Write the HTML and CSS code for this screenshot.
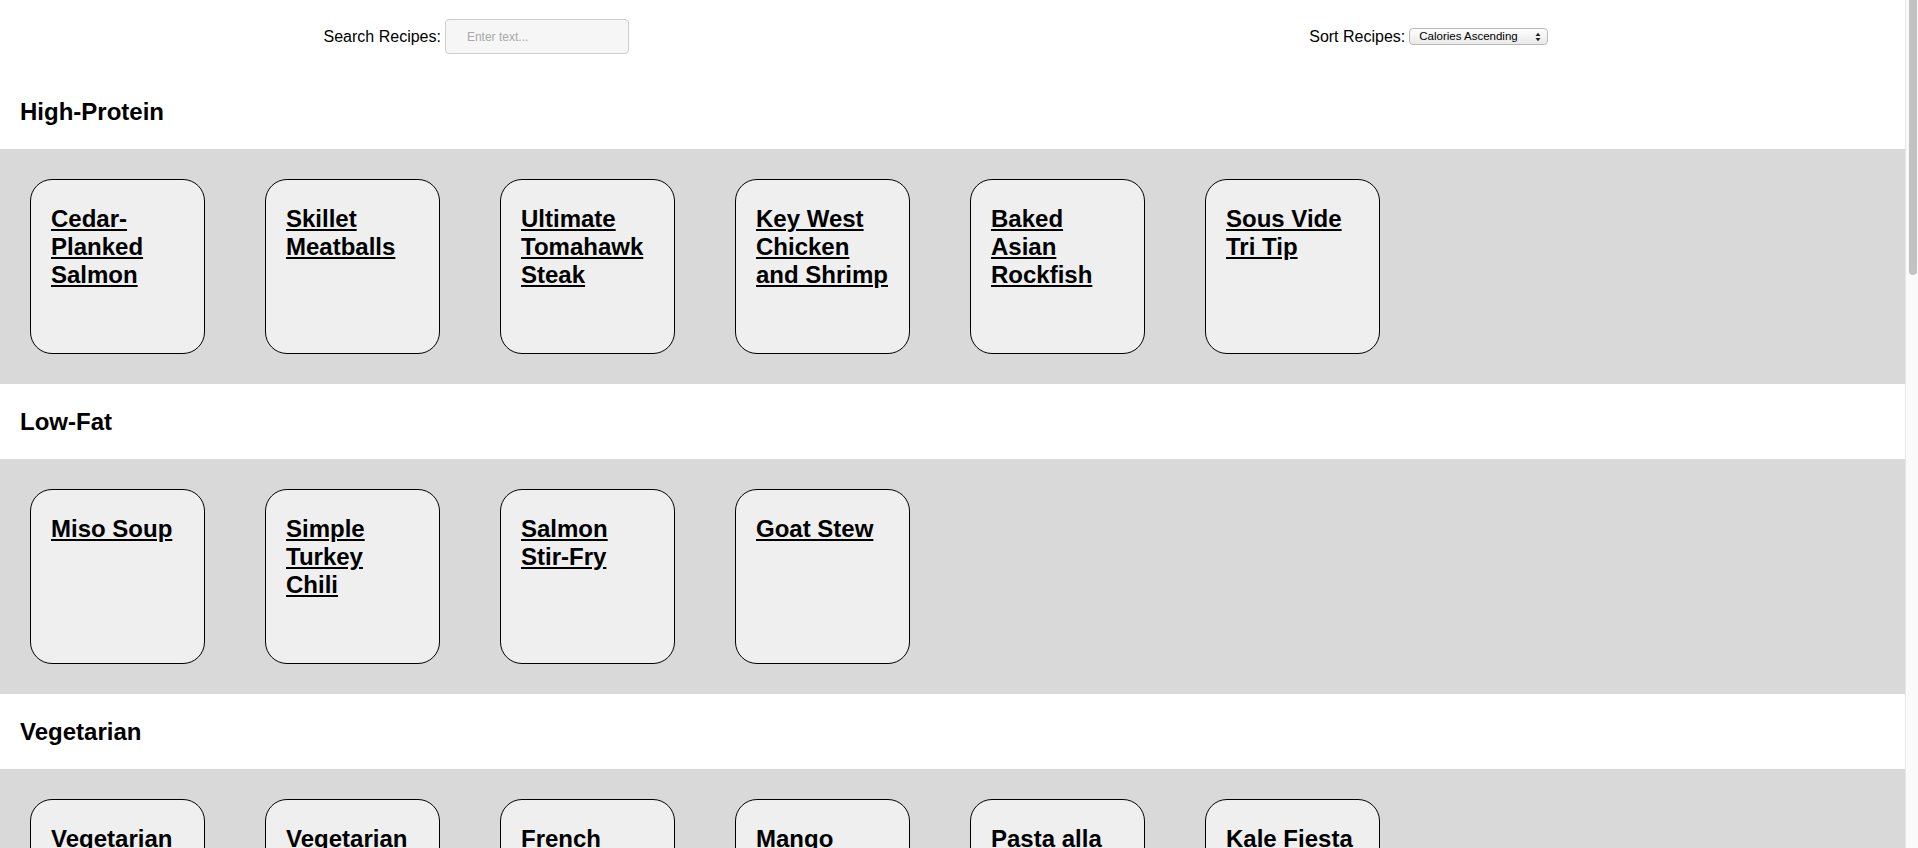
FILE: index.html
```html
<!DOCTYPE html>
<html lang="en">
<head>
<meta charset="utf-8">
<title>Recipes</title>
<link rel="stylesheet" href="styles.css">
</head>
<body>
<div class="page">
  <div class="toolbar">
    <div class="tool">
      <label class="tool-label" for="search">Search Recipes:</label>
      <input class="search-input" id="search" type="text" placeholder="Enter text...">
    </div>
    <div class="tool">
      <label class="tool-label" for="sort">Sort Recipes:</label>
      <span class="select-wrap">
        <select class="sort-select" id="sort">
          <option>Calories Ascending</option>
          <option>Calories Descending</option>
        </select>
        <svg class="select-arrows" width="6" height="10" viewBox="0 0 6 10"><path d="M0.5 4 L3 0.8 L5.5 4 Z M0.5 6 L3 9.2 L5.5 6 Z" fill="#222"/></svg>
      </span>
    </div>
  </div>

  <section class="category">
    <div class="category-head"><h2 class="category-title">High-Protein</h2></div>
    <div class="card-band">
      <div class="card"><h2 class="card-title"><a href="#">Cedar-Planked Salmon</a></h2></div>
      <div class="card"><h2 class="card-title"><a href="#">Skillet Meatballs</a></h2></div>
      <div class="card"><h2 class="card-title"><a href="#">Ultimate Tomahawk Steak</a></h2></div>
      <div class="card"><h2 class="card-title"><a href="#">Key West Chicken and Shrimp</a></h2></div>
      <div class="card"><h2 class="card-title"><a href="#">Baked Asian Rockfish</a></h2></div>
      <div class="card"><h2 class="card-title"><a href="#">Sous Vide Tri Tip</a></h2></div>
    </div>
  </section>

  <section class="category">
    <div class="category-head"><h2 class="category-title">Low-Fat</h2></div>
    <div class="card-band">
      <div class="card"><h2 class="card-title"><a href="#">Miso Soup</a></h2></div>
      <div class="card"><h2 class="card-title"><a href="#">Simple Turkey Chili</a></h2></div>
      <div class="card"><h2 class="card-title"><a href="#">Salmon Stir-Fry</a></h2></div>
      <div class="card"><h2 class="card-title"><a href="#">Goat Stew</a></h2></div>
    </div>
  </section>

  <section class="category">
    <div class="category-head"><h2 class="category-title">Vegetarian</h2></div>
    <div class="card-band">
      <div class="card"><h2 class="card-title"><a href="#">Vegetarian Chili</a></h2></div>
      <div class="card"><h2 class="card-title"><a href="#">Vegetarian Lasagna</a></h2></div>
      <div class="card"><h2 class="card-title"><a href="#">French Onion Soup</a></h2></div>
      <div class="card"><h2 class="card-title"><a href="#">Mango Salsa Bowl</a></h2></div>
      <div class="card"><h2 class="card-title"><a href="#">Pasta alla Norma</a></h2></div>
      <div class="card"><h2 class="card-title"><a href="#">Kale Fiesta Salad</a></h2></div>
    </div>
  </section>

  <section class="category">
    <div class="category-head"><h2 class="category-title">Vegan</h2></div>
    <div class="card-band">
      <div class="card"><h2 class="card-title"><a href="#">Lentil Curry</a></h2></div>
      <div class="card"><h2 class="card-title"><a href="#">Chickpea Tacos</a></h2></div>
      <div class="card"><h2 class="card-title"><a href="#">Tofu Scramble</a></h2></div>
    </div>
  </section>

  <section class="category">
    <div class="category-head"><h2 class="category-title">Gluten-Free</h2></div>
    <div class="card-band">
      <div class="card"><h2 class="card-title"><a href="#">Grilled Lamb Chops</a></h2></div>
      <div class="card"><h2 class="card-title"><a href="#">Stuffed Peppers</a></h2></div>
      <div class="card"><h2 class="card-title"><a href="#">Shrimp Risotto</a></h2></div>
      <div class="card"><h2 class="card-title"><a href="#">Roast Chicken</a></h2></div>
    </div>
  </section>

  <section class="category">
    <div class="category-head"><h2 class="category-title">Low-Carb</h2></div>
    <div class="card-band">
      <div class="card"><h2 class="card-title"><a href="#">Zucchini Noodles</a></h2></div>
      <div class="card"><h2 class="card-title"><a href="#">Cauliflower Fried Rice</a></h2></div>
      <div class="card"><h2 class="card-title"><a href="#">Egg Muffins</a></h2></div>
    </div>
  </section>

  <section class="category">
    <div class="category-head"><h2 class="category-title">Dairy-Free</h2></div>
    <div class="card-band">
      <div class="card"><h2 class="card-title"><a href="#">Thai Green Curry</a></h2></div>
      <div class="card"><h2 class="card-title"><a href="#">Beef Pho</a></h2></div>
    </div>
  </section>

  <section class="category">
    <div class="category-head"><h2 class="category-title">Keto</h2></div>
    <div class="card-band">
      <div class="card"><h2 class="card-title"><a href="#">Bacon Egg Cups</a></h2></div>
      <div class="card"><h2 class="card-title"><a href="#">Garlic Butter Steak</a></h2></div>
    </div>
  </section>
</div>
<div class="scrollbar" aria-hidden="true"><div class="scrollbar-thumb"></div></div>
</body>
</html>
```

FILE: styles.css
```css
body {
  margin: 0;
  font-family: "Liberation Sans", Arial, sans-serif;
  color: #000;
  background: #fff;
}

.page {
  margin-right: 13px;
  padding-bottom: 60px;
}

/* window scrollbar (drawn, since the capture hides native ones) */
.scrollbar {
  position: fixed;
  top: 0;
  right: 0;
  bottom: 0;
  width: 12px;
  border-left: 1px solid #e8e8e8;
  background: #fafafa;
}
.scrollbar-thumb {
  margin: 0 1px 0 3px;
  height: 275px;
  border-radius: 0 0 4px 4px;
  background: #c2c2c2;
}

.toolbar {
  display: grid;
  grid-template-columns: 1fr 1fr;
  padding: 19px 0 20px;
  height: 35px;
}

.tool {
  display: flex;
  justify-content: center;
  align-items: center;
  gap: 4px;
}

.tool-label {
  font-size: 16px;
}

.search-input {
  box-sizing: border-box;
  width: 184px;
  height: 35px;
  margin: 0;
  padding: 0 0 0 21px;
  border: 1px solid #cfcfcf;
  border-radius: 4px;
  background: #f6f6f6;
  font-family: "Liberation Sans", Arial, sans-serif;
  font-size: 12px;
  color: #333;
  outline: none;
}
.search-input::placeholder {
  color: #a9a9a9;
}

.select-wrap {
  position: relative;
  display: inline-flex;
}

.sort-select {
  -webkit-appearance: none;
  appearance: none;
  box-sizing: border-box;
  width: 139px;
  height: 17px;
  margin: 0;
  padding: 0 0 0 9px;
  border: 1px solid #b9b9b9;
  border-radius: 4px;
  background: linear-gradient(#fefefe, #e9e9e9);
  font-family: "Liberation Sans", Arial, sans-serif;
  font-size: 11.5px;
  line-height: 15px;
  color: #000;
  outline: none;
}

.select-arrows {
  position: absolute;
  right: 7px;
  top: 3.5px;
  pointer-events: none;
}

.category-head {
  padding: 24px 20px 23px;
}

.category-title {
  margin: 0;
  font-size: 24px;
  line-height: 28px;
  font-weight: bold;
}

.card-band {
  display: flex;
  gap: 60px;
  padding: 30px;
  background: #d9d9d9;
}

.card {
  box-sizing: border-box;
  flex: none;
  width: 175px;
  height: 175px;
  padding: 25px 18px 0 20px;
  border: 1px solid #000;
  border-radius: 22px;
  background: #efefef;
}

.card-title {
  margin: 0;
  font-size: 24px;
  font-weight: bold;
  line-height: normal;
}

.card-title a {
  color: #000;
  text-decoration: underline;
}
```
